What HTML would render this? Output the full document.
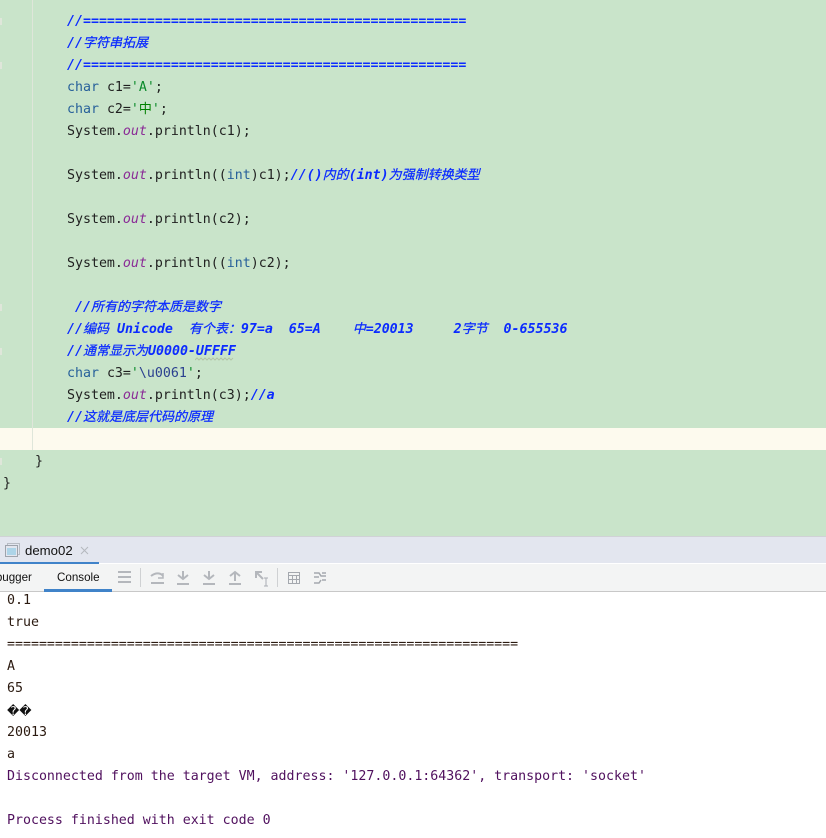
<!DOCTYPE html>
<html><head><meta charset="utf-8">
<style>
html,body{margin:0;padding:0}
body{width:826px;height:838px;overflow:hidden;position:relative;background:#fff;font-family:"DejaVu Sans Mono","Noto Sans CJK SC",monospace;font-size:13.28px}
.a{position:absolute}
.l{position:absolute;white-space:pre;height:22px;line-height:22px;color:#1f1f1f;margin-top:1px}
.c{color:#0b2bff;font-style:italic;font-weight:bold}
.z{font-family:"Noto Sans CJK SC",sans-serif;font-size:13px;font-weight:normal;line-height:0;-webkit-text-stroke:.25px currentColor}
.k{color:#27609a}
.s{color:#0a8a2a}
.g{color:#008000;-webkit-text-stroke:0}
.o{color:#8a2a96;font-style:italic}
.t{color:#2a3f8f}
.p{color:#50105e}
.r{color:#2b1a10}
.ui{font-family:"Liberation Sans","Noto Sans CJK SC",sans-serif;font-size:11.6px;color:#111;white-space:pre}
svg{position:absolute}
</style></head>
<body>
<div class="a" style="left:0;top:0;width:826px;height:536px;background:#c9e4ca"></div>
<div class="a" style="left:0;top:428px;width:826px;height:22px;background:#fdfaee"></div>
<div class="a" style="left:32px;top:0;width:1px;height:450px;background:#dfe6da"></div>
<div class="a" style="left:0;top:18px;width:2px;height:7px;background:#dfe6da"></div>
<div class="a" style="left:0;top:62px;width:2px;height:7px;background:#dfe6da"></div>
<div class="a" style="left:0;top:304px;width:2px;height:7px;background:#dfe6da"></div>
<div class="a" style="left:0;top:348px;width:2px;height:7px;background:#dfe6da"></div>
<div class="a" style="left:0;top:458px;width:2px;height:7px;background:#dfe6da"></div>

<div class="l c" style="left:67px;top:10px">//================================================</div>
<div class="l c" style="left:67px;top:32px">//<span class="z">字符串拓展</span></div>
<div class="l c" style="left:67px;top:54px">//================================================</div>
<div class="l" style="left:67px;top:76px"><span class="k">char</span> c1=<span class="s">'A'</span>;</div>
<div class="l" style="left:67px;top:98px"><span class="k">char</span> c2=<span class="s">'</span><span class="z g">中</span><span class="s">'</span>;</div>
<div class="l" style="left:67px;top:120px">System.<span class="o">out</span>.println(c1);</div>
<div class="l" style="left:67px;top:164px">System.<span class="o">out</span>.println((<span class="k">int</span>)c1);<span class="c">//()<span class="z">内的</span>(int)<span class="z">为强制转换类型</span></span></div>
<div class="l" style="left:67px;top:208px">System.<span class="o">out</span>.println(c2);</div>
<div class="l" style="left:67px;top:252px">System.<span class="o">out</span>.println((<span class="k">int</span>)c2);</div>
<div class="l c" style="left:75px;top:296px">//<span class="z">所有的字符本质是数字</span></div>
<div class="l c" style="left:67px;top:318px">//<span class="z">编码</span> Unicode  <span class="z">有个表：</span>97=a  65=A    <span class="z">中</span>=20013     2<span class="z">字节</span>  0-655536</div>
<div class="l c" style="left:67px;top:340px">//<span class="z">通常显示为</span>U0000-UFFFF</div>
<svg style="left:195px;top:357px" width="41" height="4" viewBox="0 0 41 4"><path d="M0 3l2-2 2 2 2-2 2 2 2-2 2 2 2-2 2 2 2-2 2 2 2-2 2 2 2-2 2 2 2-2 2 2 2-2 2 2 2-2" fill="none" stroke="#b3c4a6" stroke-width="1"/></svg>
<div class="l" style="left:67px;top:362px"><span class="k">char</span> c3=<span class="s">'</span><span class="t">\u0061</span><span class="s">'</span>;</div>
<div class="l" style="left:67px;top:384px">System.<span class="o">out</span>.println(c3);<span class="c">//a</span></div>
<div class="l c" style="left:67px;top:406px">//<span class="z">这就是底层代码的原理</span></div>
<div class="l" style="left:35px;top:450px">}</div>
<div class="l" style="left:3px;top:472px">}</div>

<!-- tab bar -->
<div class="a" style="left:0;top:536px;width:826px;height:27px;background:#e3e6ef;border-top:1px solid #d0d2d6;box-sizing:border-box"></div>
<div class="a" style="left:0;top:562px;width:99px;height:3px;background:#4083c9"></div>
<svg style="left:5px;top:543px" width="16" height="14" viewBox="0 0 16 14"><rect x="2.5" y="0.5" width="12" height="11" fill="none" stroke="#b8bcc4"/><rect x="0.5" y="2.5" width="12" height="11" fill="#e3e6ef" stroke="#9ea3ac"/><rect x="2" y="5" width="9" height="7" fill="#add4e8"/></svg>
<div class="ui a" style="left:25px;top:543px;font-size:13.200px;line-height:15px">demo02</div>
<svg style="left:80px;top:546px" width="9" height="9" viewBox="0 0 9 9"><path d="M1 1L8 8M8 1L1 8" stroke="#b5b8be" stroke-width="1" fill="none"/></svg>

<!-- toolbar -->
<div class="a" style="left:0;top:564px;width:826px;height:27px;background:#f3f4f4;border-bottom:1px solid #c8c8c8"></div>
<div class="ui a" style="left:-19px;top:571px;line-height:14px">Debugger</div>
<div class="ui a" style="left:57px;top:571px;line-height:14px">Console</div>
<div class="a" style="left:44px;top:589px;width:68px;height:3px;background:#4083c9"></div>
<svg style="left:0;top:564px" width="340" height="27" viewBox="0 0 340 27">
<g fill="none" stroke="#b4b7bc" stroke-width="2">
<path d="M118 8h13M118 13h13M118 18h13"/>
<path d="M151 12c5-4 10-3 12 0M151 19h13"/><path d="M158 14h5v-5" stroke-width="1.500"/>
<path d="M183 7v7M178 11l5 4 5-4M177 20h12"/>
<path d="M209 7v7M204 11l5 4 5-4M203 20h12"/>
<path d="M235 17v-9M230 12l5-4 5 4M229 20h12"/>
<path d="M256 8l7 7M256 14V8h6"/>
</g>
<path d="M264 14h4M266 14v8M264 22h4" fill="none" stroke="#a9adb3" stroke-width="1"/>
<path d="M140.500 4v19M277.500 4v19" stroke="#cfd1d3" stroke-width="1"/>
<rect x="288.500" y="8.500" width="11" height="11" fill="none" stroke="#a4a8ae"/>
<path d="M288 11.500h12M288 15.500h12M292.500 11v8M296.500 11v8" stroke="#a4a8ae"/>
<path d="M314 9h5l2 3h5M314 13h5M322 16h4M314 19h5l2-3M322 9h4" fill="none" stroke="#a4a8ae" stroke-width="1.500"/>
</svg>

<!-- console -->
<div class="l r" style="left:7px;top:589px">0.1</div>
<div class="l r" style="left:7px;top:611px">true</div>
<div class="l r" style="left:7px;top:633px">================================================================</div>
<div class="l r" style="left:7px;top:655px">A</div>
<div class="l r" style="left:7px;top:677px">65</div>
<div class="l" style="left:7px;top:699px;color:#111;font-family:'DejaVu Sans',sans-serif;font-size:12px">��</div>
<div class="l r" style="left:7px;top:721px">20013</div>
<div class="l r" style="left:7px;top:743px">a</div>
<div class="l p" style="left:7px;top:765px">Disconnected from the target VM, address: '127.0.0.1:64362', transport: 'socket'</div>
<div class="l p" style="left:7px;top:809px">Process finished with exit code 0</div>
</body></html>
